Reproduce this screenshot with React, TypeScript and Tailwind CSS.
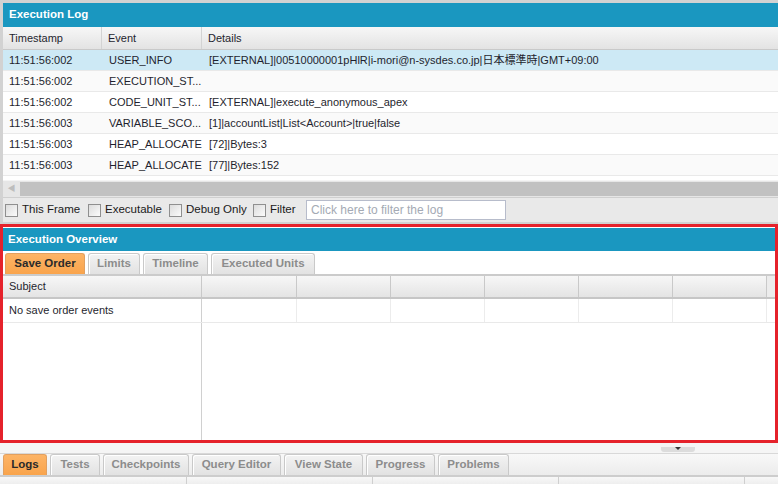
import React from "react";

const font = { fontFamily: '"Liberation Sans", Arial, "Noto Sans CJK JP", sans-serif' };

const logRows = [
  ["11:51:56:002", "USER_INFO", "[EXTERNAL]|00510000001pHlR|i-mori@n-sysdes.co.jp|日本標準時|GMT+09:00"],
  ["11:51:56:002", "EXECUTION_ST...", ""],
  ["11:51:56:002", "CODE_UNIT_ST...", "[EXTERNAL]|execute_anonymous_apex"],
  ["11:51:56:003", "VARIABLE_SCO...", "[1]|accountList|List<Account>|true|false"],
  ["11:51:56:003", "HEAP_ALLOCATE", "[72]|Bytes:3"],
  ["11:51:56:003", "HEAP_ALLOCATE", "[77]|Bytes:152"],
];

function Tab({ label, active, w }: { label: string; active?: boolean; w: string }) {
  return (
    <div
      className={
        "h-[21px] mr-[3px] flex items-center justify-center rounded-t-[3px] border border-b-0 text-[11.5px] font-bold " +
        w +
        (active
          ? " bg-gradient-to-b from-[#fdb466] to-[#f9a44c] border-[#e2a060] text-[#2a2a2a]"
          : " bg-gradient-to-b from-[#f3f3f3] to-[#e2e2e2] border-[#c9c9c9] text-[#8c8c8c] shadow-[inset_1px_1px_0_#fff]")
      }
    >
      {label}
    </div>
  );
}

function Check({ label, w }: { label: string; w: string }) {
  return (
    <div className={"flex items-center " + w}>
      <div className="w-[13px] h-[13px] border border-[#8f8f8f] bg-gradient-to-br from-[#dcdcdc] to-[#fbfbfb]" />
      <span className="ml-[4px] text-[11.5px] text-[#1a1a1a]">{label}</span>
    </div>
  );
}

export default function App() {
  return (
    <div className="w-[778px] h-[484px] overflow-hidden bg-[#d2d2d2] flex flex-col text-[#1f1f2e]" style={font}>
      {/* Execution Log */}
      <div className="pl-[3px] pt-[3px] flex flex-col">
        <div className="h-[24px] bg-[#1a97c0] text-white font-bold text-[11.5px] flex items-center pl-[6px]">
          Execution Log
        </div>
        <div className="h-[23px] flex bg-gradient-to-b from-[#f7f7f7] to-[#e3e3e3] border-b border-[#c9c9c9] text-[11px]">
          <div className="w-[99px] pl-[6px] flex items-center border-r border-[#d3d3d3]">Timestamp</div>
          <div className="w-[100px] pl-[6px] flex items-center border-r border-[#d3d3d3]">Event</div>
          <div className="flex-1 pl-[6px] flex items-center">Details</div>
        </div>
        <div className="h-[130px] bg-white overflow-hidden">
          {logRows.map((r, i) => (
            <div
              key={i}
              className={
                "h-[21px] flex text-[11px] border-b border-[#e9e9e9] " +
                (i === 0 ? "bg-[#cde9f5]" : i % 2 === 1 ? "bg-[#fafafa]" : "bg-white")
              }
            >
              <div className="w-[99px] pl-[6px] flex items-center">{r[0]}</div>
              <div className="w-[100px] pl-[7px] flex items-center">{r[1]}</div>
              <div className="flex-1 pl-[7px] flex items-center whitespace-nowrap">{r[2]}</div>
            </div>
          ))}
        </div>
        <div className="h-[17px] flex bg-[#e6e6e6] border-t border-[#f4f4f4]">
          <div className="w-[17px] flex items-center justify-center text-[#bdbdbd] text-[8px]">◀</div>
          <div className="flex-1 my-[1px] bg-[#c1c1c1]" />
        </div>
        <div className="h-[25px] flex items-center bg-[#e9e9e9] border-t border-[#cfcfcf] pl-[2px]">
          <Check label="This Frame" w="w-[83px]" />
          <Check label="Executable" w="w-[81px]" />
          <Check label="Debug Only" w="w-[84px]" />
          <Check label="Filter" w="w-[53px]" />
          <div className="w-[200px] h-[20px] bg-white border border-[#b7bccb] flex items-center pl-[4px] text-[12px] text-[#a4aab4]">
            Click here to filter the log
          </div>
        </div>
      </div>

      {/* Execution Overview */}
      <div className="mt-[2px] h-[219px] border-[3px] border-[#e5222b] bg-white flex flex-col">
        <div className="h-[23px] mt-px bg-[#1a97c0] text-white font-bold text-[11.5px] flex items-center pl-[5px]">
          Execution Overview
        </div>
        <div className="h-[25px] flex items-end pl-[2px] bg-white border-b-2 border-[#cbcbcb]">
          <Tab label="Save Order" active w="w-[80px]" />
          <Tab label="Limits" w="w-[52px]" />
          <Tab label="Timeline" w="w-[65px]" />
          <Tab label="Executed Units" w="w-[104px]" />
        </div>
        <div className="h-[23px] grid grid-cols-[199px_95px_94px_94px_94px_94px_94px_1fr] bg-gradient-to-b from-[#f7f7f7] to-[#e4e4e4] border-b-2 border-[#c6c6c6] text-[11px]">
          <div className="pl-[6px] flex items-center border-r border-[#c9c9c9]">Subject</div>
          <div className="border-r border-[#c9c9c9]" />
          <div className="border-r border-[#c9c9c9]" />
          <div className="border-r border-[#c9c9c9]" />
          <div className="border-r border-[#c9c9c9]" />
          <div className="border-r border-[#c9c9c9]" />
          <div className="border-r border-[#c9c9c9]" />
          <div className="bg-[#ececec]" />
        </div>
        <div className="h-[24px] grid grid-cols-[199px_95px_94px_94px_94px_94px_94px_1fr] border-b border-[#e9e9e9] text-[11px]">
          <div className="pl-[6px] flex items-center border-r border-[#d0d0d0]">No save order events</div>
          <div className="border-r border-[#ececec]" />
          <div className="border-r border-[#ececec]" />
          <div className="border-r border-[#ececec]" />
          <div className="border-r border-[#ececec]" />
          <div className="border-r border-[#ececec]" />
          <div className="border-r border-[#ececec]" />
          <div />
        </div>
        <div className="flex-1 flex">
          <div className="w-[199px] border-r border-[#d0d0d0]" />
          <div className="flex-1" />
        </div>
      </div>

      {/* Bottom dock */}
      <div className="h-[10px] bg-[#f5f5f5] flex justify-end pr-[83px]">
        <div className="mt-[4px] w-[34px] h-[5px] bg-[#dcdcdc] rounded-b-[3px] flex justify-center">
          <div className="w-0 h-0 border-l-[3px] border-r-[3px] border-t-[3px] border-l-transparent border-r-transparent border-t-[#333]" />
        </div>
      </div>
      <div className="h-[24px] flex items-end pl-[3px] bg-gradient-to-b from-[#f8f8f8] to-[#ececec] border-t border-[#d8d8d8] border-b-2 border-b-[#cdcdcd]">
        <Tab label="Logs" active w="w-[44px]" />
        <Tab label="Tests" w="w-[50px]" />
        <Tab label="Checkpoints" w="w-[86px]" />
        <Tab label="Query Editor" w="w-[89px]" />
        <Tab label="View State" w="w-[79px]" />
        <Tab label="Progress" w="w-[69px]" />
        <Tab label="Problems" w="w-[71px]" />
      </div>
      <div className="flex-1 grid grid-cols-[184px_186px_186px_186px_1fr] bg-gradient-to-b from-[#f8f8f8] to-[#eeeeee] pl-[3px]">
        <div className="border-r border-[#cfcfcf]" />
        <div className="border-r border-[#cfcfcf]" />
        <div className="border-r border-[#cfcfcf]" />
        <div className="border-r border-[#cfcfcf]" />
        <div />
      </div>
    </div>
  );
}
